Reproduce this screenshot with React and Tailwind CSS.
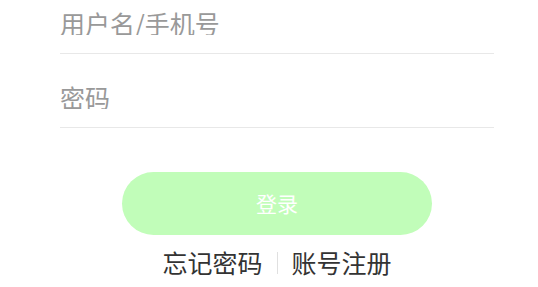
import React from "react";

export default function App() {
  const font = { fontFamily: '"Noto Sans CJK SC", "Noto Sans", sans-serif' };
  return (
    <div className="w-[538px] h-[287px] bg-white overflow-hidden" style={font}>
      <div className="ml-[60px] w-[434px] flex flex-col">
        {/* Username */}
        <div className="pt-[10px] pb-[18px] border-b border-[#e8e8e8]">
          <input
            className="block w-full outline-none text-[25px] leading-[25px] h-[25px] text-[#333] placeholder:text-[#999] bg-transparent"
            placeholder="用户名/手机号"
          />
        </div>

        {/* Password */}
        <div className="pt-[30px] pb-[18px] border-b border-[#e8e8e8]">
          <input
            type="password"
            className="block w-full outline-none text-[25px] leading-[25px] h-[25px] text-[#333] placeholder:text-[#999] bg-transparent"
            placeholder="密码"
          />
        </div>

        {/* Login */}
        <div className="flex justify-center mt-[44px]">
          <button className="w-[310px] h-[63px] rounded-full bg-[#c1fdb9] text-white text-[21px] leading-none">
            登录
          </button>
        </div>

        {/* Links */}
        <div className="flex justify-center items-center mt-[15px] text-[25px] leading-[25px] text-[#333]">
          <span>忘记密码</span>
          <span className="w-px h-[22px] bg-[#e0e0e0] mx-[14px]" />
          <span>账号注册</span>
        </div>
      </div>
    </div>
  );
}
